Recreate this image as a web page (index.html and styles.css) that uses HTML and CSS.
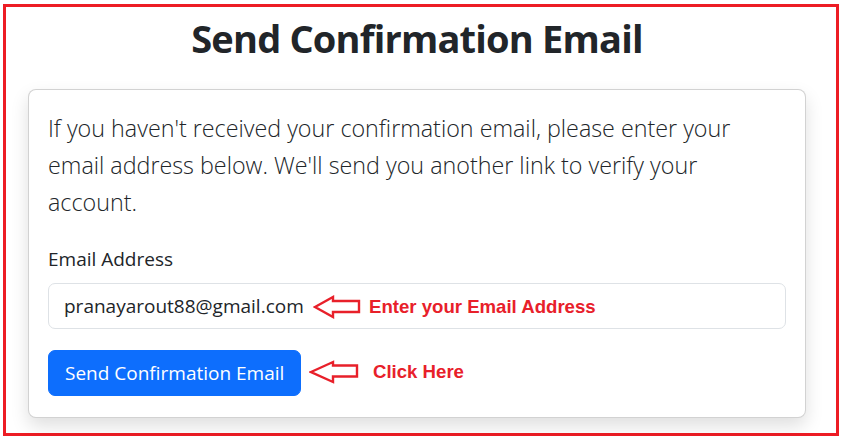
FILE: index.html
```html
<!DOCTYPE html>
<html lang="en">
<head>
<meta charset="utf-8">
<title>Send Confirmation Email</title>
<link rel="stylesheet" href="styles.css">
</head>
<body>
<div class="frame">
  <div class="container">
    <h1 class="title">Send Confirmation Email</h1>
    <div class="card">
      <div class="card-body">
        <p class="lead">If you haven't received your confirmation email, please enter your email address below. We'll send you another link to verify your account.</p>
        <label class="label" for="email">Email Address</label>
        <div class="field">
          <input class="input" id="email" type="email" value="pranayarout88@gmail.com">
          <div class="note note-email">
            <svg class="arrow" width="48" height="24" viewBox="0 0 48 24"><path d="M2 12 L20 2 L20 6 L46 6 L46 17 L20 17 L20 22 Z"/></svg>
            <span class="note-text">Enter your Email Address</span>
          </div>
        </div>
        <div class="field">
          <button class="btn" type="button">Send Confirmation Email</button>
          <div class="note note-click">
            <svg class="arrow" width="50" height="24" viewBox="0 0 50 24"><path d="M2 12 L24 2 L24 5.5 L48 5.5 L48 16.5 L24 16.5 L24 22 Z"/></svg>
            <span class="note-text">Click Here</span>
          </div>
        </div>
      </div>
    </div>
  </div>
</div>
</body>
</html>
```

FILE: styles.css
```css
html, body {
  margin: 0;
  padding: 0;
  background: #ffffff;
}

body {
  font-family: "Open Sans", "Noto Sans", sans-serif;
  color: #212529;
}

.frame {
  box-sizing: border-box;
  width: 836px;
  height: 432px;
  margin: 4px 0 0 3px;
  border: 3px solid #ed1c24;
}

.container {
  width: 778px;
  margin-left: 22px;
}

.title {
  margin: 0;
  padding-top: 7px;
  text-align: center;
  font-size: 38px;
  letter-spacing: -0.8px;
  line-height: 48px;
  font-weight: 700;
  color: #212529;
}

.card {
  margin-top: 27px;
  border: 1px solid rgba(0, 0, 0, 0.175);
  border-radius: 8px;
  background: #fff;
  box-shadow: 0 8px 18px rgba(0, 0, 0, 0.13);
}

.card-body {
  padding: 20px 19px 21px;
}

.lead {
  margin: 0 0 23px;
  font-size: 23.3px;
  font-weight: 300;
  line-height: 37px;
}

.label {
  display: block;
  margin-bottom: 9px;
  font-size: 19px;
  line-height: 30px;
}

.field {
  position: relative;
}

.field + .field {
  margin-top: 21px;
}

.input {
  box-sizing: border-box;
  display: block;
  width: 100%;
  height: 46px;
  padding: 0 15px;
  border: 1px solid #dee2e6;
  border-radius: 7px;
  font-family: inherit;
  font-size: 19px;
  color: #212529;
  background: #fff;
}

.btn {
  box-sizing: border-box;
  display: block;
  height: 46px;
  padding: 0 16px;
  border: 1px solid #0d6efd;
  border-radius: 7px;
  background: #0d6efd;
  color: #fff;
  font-family: inherit;
  font-size: 19px;
}

.note {
  position: absolute;
  display: flex;
  align-items: center;
}

.note-email {
  left: 265px;
  top: 12px;
}

.note-click {
  left: 261px;
  top: 10px;
}

.arrow path {
  fill: #fff;
  stroke: #e8202a;
  stroke-width: 2.4;
  stroke-linejoin: miter;
}

.note-text {
  font-family: "Liberation Sans", Arial, sans-serif;
  font-weight: 700;
  font-size: 18.6px;
  color: #e8202a;
}

.note-email .note-text {
  margin-left: 8px;
}

.note-click .note-text {
  margin-left: 14px;
}
```
